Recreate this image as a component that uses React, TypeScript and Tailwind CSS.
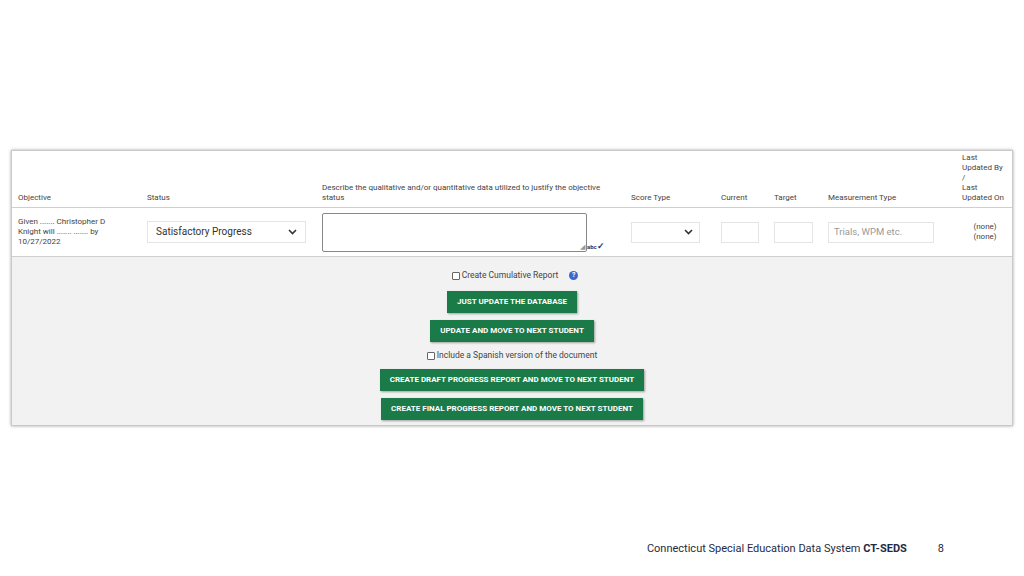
import React from 'react';

const cols = 'grid grid-cols-[129px_175px_309px_90px_53px_54px_134px_1fr]';

function Btn({ label }: { label: string }) {
  return (
    <button className="h-[22px] px-[10px] bg-[#1a7a48] text-white text-[8px] font-bold shadow-[1px_1px_2px_rgba(0,0,0,0.35)] font-[Roboto,sans-serif]">
      {label}
    </button>
  );
}

function Chevron() {
  return (
    <svg width="9" height="6" viewBox="0 0 9 6" className="text-[#333]">
      <path d="M1 1l3.5 3.5L8 1" stroke="currentColor" strokeWidth="1.6" fill="none" />
    </svg>
  );
}

export default function App() {
  return (
    <div className="w-[1024px] h-[576px] bg-white relative font-[Roboto,sans-serif] text-[#444]">
      <div className="pt-[150px] px-[11px]">
        <div className="w-[1002px] border border-[#c9c9c9] shadow-[0_0_3px_rgba(0,0,0,0.35)]">
          {/* header */}
          <div className={`${cols} h-[57px] items-end pb-[4px] pl-[6px] text-[8px] leading-[10px] border-b border-[#cfcfcf]`}>
            <div>Objective</div>
            <div>Status</div>
            <div className="pr-[30px]">Describe the qualitative and/or quantitative data utilized to justify the objective status</div>
            <div>Score Type</div>
            <div>Current</div>
            <div>Target</div>
            <div>Measurement Type</div>
            <div>Last<br />Updated By<br />/<br />Last<br />Updated On</div>
          </div>
          {/* row */}
          <div className={`${cols} h-[49px] items-center pl-[6px] text-[8px] leading-[10px] border-b border-[#cfcfcf]`}>
            <div className="pr-[22px]">Given ....... Christopher D Knight will ....... ....... by 10/27/2022</div>
            <div className="pr-[16px]">
              <div className="h-[22px] border border-[#e4e4e4] flex items-center justify-between px-[8px] text-[10px] text-[#333]">
                Satisfactory Progress <Chevron />
              </div>
            </div>
            <div className="flex items-end">
              <div className="w-[265px] h-[39px] border border-[#888] rounded-[2px] relative">
                <span className="absolute right-[1px] bottom-0 text-[#999] text-[7px] leading-none">◢</span>
              </div>
              <span className="text-[6px] font-bold text-[#1e3a70] leading-none mb-[1px]">abc<span className="text-[9px]">✓</span></span>
            </div>
            <div className="pr-[21px]">
              <div className="h-[21px] border border-[#e4e4e4] flex items-center justify-end px-[6px]"><Chevron /></div>
            </div>
            <div className="pr-[15px]"><div className="h-[21px] border border-[#e4e4e4]" /></div>
            <div className="pr-[15px]"><div className="h-[21px] border border-[#e4e4e4]" /></div>
            <div className="pr-[28px]">
              <div className="h-[21px] border border-[#e4e4e4] flex items-center px-[5px] text-[9.5px] text-[#999]">Trials, WPM etc.</div>
            </div>
            <div className="text-center pr-[4px]">(none)<br />(none)</div>
          </div>
          {/* actions */}
          <div className="bg-[#f2f2f2] h-[168px] flex flex-col items-center pt-[13px] text-[8.5px]">
            <label className="flex items-center gap-[2px] h-[11px] ml-[6px]">
              <span className="w-[8px] h-[8px] border border-[#666] rounded-[1px] bg-white" />
              Create Cumulative Report
              <span className="ml-[9px] w-[9px] h-[9px] rounded-full bg-[#3b67c9] text-white text-[7px] font-bold leading-[9px] text-center">?</span>
            </label>
            <div className="mt-[10px]"><Btn label="JUST UPDATE THE DATABASE" /></div>
            <div className="mt-[7px]"><Btn label="UPDATE AND MOVE TO NEXT STUDENT" /></div>
            <label className="flex items-center gap-[2px] mt-[8px] h-[11px]">
              <span className="w-[8px] h-[8px] border border-[#666] rounded-[1px] bg-white" />
              Include a Spanish version of the document
            </label>
            <div className="mt-[8px]"><Btn label="CREATE DRAFT PROGRESS REPORT AND MOVE TO NEXT STUDENT" /></div>
            <div className="mt-[7px]"><Btn label="CREATE FINAL PROGRESS REPORT AND MOVE TO NEXT STUDENT" /></div>
          </div>
        </div>
      </div>
      <div className="absolute right-[80px] top-[541px] flex gap-[31px] font-['Open_Sans',sans-serif] text-[11px] text-[#1f2a44]">
        <span>Connecticut Special Education Data System <b>CT-SEDS</b></span>
        <span>8</span>
      </div>
    </div>
  );
}
